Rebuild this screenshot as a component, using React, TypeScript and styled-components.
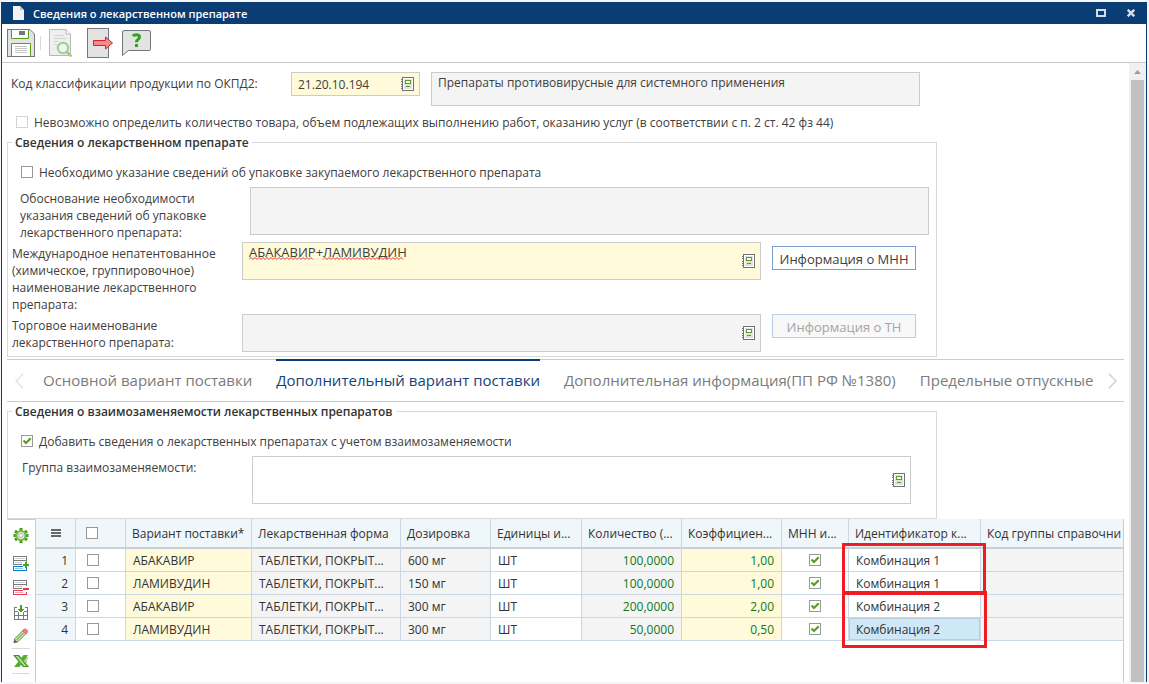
import React from "react";
import styled, { createGlobalStyle, css } from "styled-components";

const GlobalStyle = createGlobalStyle`
  *, *::before, *::after { box-sizing: border-box; }
  body {
    margin: 0;
    background: #fff;
    color: #404040;
    font-family: "Open Sans", "Noto Sans", sans-serif;
    font-size: 12px;
    line-height: 17px;
  }
  button, input, textarea { font: inherit; color: inherit; }
`;

const colors = {
  navy: "#0a3d73",
  line: "#cccccc",
  softLine: "#d9d9d9",
  gridLine: "#ccd7e4",
  head: "#eff7fb",
  yellow: "#fffad9",
  gray: "#f4f4f4",
  green: "#5a9e1c",
};

/* ---------- window frame ---------- */

const Desktop = styled.div`
  min-height: 100vh;
  display: flex;
  padding: 2px 2px 2px 1px;
  background: #f4f6f9;
`;

const Window = styled.main`
  flex: 1;
  min-width: 0;
  display: flex;
  flex-direction: column;
  background: #fff;
  border: solid ${colors.navy};
  border-width: 0 1px;
`;

const TitleBar = styled.header`
  height: 22px;
  display: flex;
  align-items: center;
  padding-left: 11px;
  background: ${colors.navy};
  color: #fff;
`;

const Title = styled.h1`
  flex: 1;
  margin: 0 0 0 9px;
  font-size: 11px;
  line-height: 17px;
  font-weight: 600;
`;

const IconButton = styled.button<{ $w: number; $h: number; $dim?: boolean }>`
  display: flex;
  align-items: center;
  justify-content: center;
  flex: none;
  width: ${(p) => p.$w}px;
  height: ${(p) => p.$h}px;
  padding: 0;
  border: 0;
  background: none;
  opacity: ${(p) => (p.$dim ? 0.5 : 1)};
`;

const Toolbar = styled.div`
  height: 39px;
  flex: none;
  display: flex;
  align-items: center;
  padding: 0 5px;
  border-bottom: 1px solid ${colors.line};
`;

const ToolDivider = styled.span`
  width: 1px;
  height: 14px;
  margin: 0 8px 0 5px;
  background: ${colors.softLine};
`;

const ToolGap = styled.span`
  width: 14px;
`;

const Body = styled.div`
  flex: 1;
  display: flex;
`;

const Content = styled.div`
  flex: 1;
  min-width: 0;
  display: flex;
  flex-direction: column;
  padding: 9px 5px 0;
`;

const ScrollTrack = styled.div`
  width: 17px;
  flex: none;
  display: flex;
  flex-direction: column;
  align-items: center;
  background: #f0f0f0;
`;

const ScrollThumb = styled.div`
  flex: 1;
  width: 13px;
  background: #c1c1c1;
`;

/* ---------- form ---------- */

const CodeRow = styled.div`
  display: flex;
  align-items: flex-start;
  padding-left: 4px;
`;

const CodeLabel = styled.label`
  width: 280px;
  flex: none;
  padding-top: 3px;
`;

const CodeGap = styled.span`
  width: 11px;
`;

type Tone = "yellow" | "gray" | "white";

const FieldBox = styled.div<{ $tone: Tone; $h: number; $max: number }>`
  flex: 1 1 0;
  min-width: 0;
  max-width: ${(p) => p.$max}px;
  height: ${(p) => p.$h}px;
  display: flex;
  align-items: center;
  padding-right: 5px;
  border: 1px solid ${colors.line};
  background: ${(p) => (p.$tone === "white" ? "#fff" : colors[p.$tone])};
  position: relative;
`;

const fieldText = css`
  flex: 1;
  min-width: 0;
  align-self: stretch;
  border: 0;
  outline: 0;
  background: none;
  padding: 1px 6px;
  line-height: 17px;
`;

const TextInput = styled.input`
  ${fieldText}
`;

const TextArea = styled.textarea<{ $large?: boolean }>`
  ${fieldText}
  font-size: ${(p) => (p.$large ? 13 : 12)}px;
  resize: none;
  overflow: hidden;
`;

const Squiggles = styled.svg`
  position: absolute;
  left: 6px;
  top: 14px;
  pointer-events: none;
`;

const CheckLine = styled.label<{ $indent: number; $top: number }>`
  display: flex;
  align-items: center;
  gap: 6px;
  height: 20px;
  margin: ${(p) => p.$top}px 0 0 ${(p) => p.$indent}px;
`;

const CheckSlot = styled.span<{ $center?: boolean }>`
  display: flex;
  align-items: center;
  justify-content: ${(p) => (p.$center ? "center" : "flex-start")};
  padding-left: ${(p) => (p.$center ? 0 : 4)}px;
`;

const TickWrap = styled.span`
  display: inline-grid;
  flex: none;
  width: 12px;
  height: 12px;
  vertical-align: middle;
  > * { grid-area: 1 / 1; }
`;

const TickInput = styled.input`
  appearance: none;
  width: 12px;
  height: 12px;
  margin: 0;
  border: 1px solid #999;
  background: #fff;
  &:disabled { border-color: #d4d4d4; }
`;

const Group = styled.fieldset<{ $top: number; $bottom: number }>`
  width: 100%;
  max-width: 930px;
  min-width: 0;
  margin: ${(p) => p.$top}px 0 0;
  padding: 0 0 ${(p) => p.$bottom}px;
  border: 1px solid ${colors.softLine};
`;

const Legend = styled.legend`
  margin-left: 4px;
  padding: 0 3px;
  font-weight: 600;
  color: #333;
`;

const FormRow = styled.div<{ $indent: number; $top: number }>`
  display: flex;
  align-items: flex-start;
  margin-top: ${(p) => p.$top}px;
  padding: 0 7px 0 ${(p) => p.$indent}px;
`;

const FormLabel = styled.label`
  width: 230px;
  flex: none;
  padding: 3px 10px 0 0;
`;

const ActionButton = styled.button<{ $top?: number }>`
  width: 144px;
  height: 24px;
  flex: none;
  margin: ${(p) => p.$top ?? 0}px 0 0 11px;
  padding: 2px 0 0;
  border: 1px solid #7ba0cc;
  background: #fff;
  font-size: 13px;
  &:disabled {
    color: #a5a5a5;
    border-color: #b9cde5;
    background: #f8f8f8;
  }
`;

/* ---------- tabs ---------- */

const TabBar = styled.nav`
  height: 43px;
  flex: none;
  display: flex;
  margin-top: 2px;
  border: solid ${colors.line};
  border-width: 1px 0;
`;

const TabList = styled.div`
  flex: 1;
  min-width: 0;
  display: flex;
  gap: 24px;
  margin: -1px 0 0 12px;
  overflow: hidden;
`;

const Tab = styled.button<{ $active?: boolean }>`
  flex: none;
  padding: 0 0 3px;
  border: 0;
  border-top: 2px solid ${(p) => (p.$active ? colors.navy : "transparent")};
  background: none;
  color: ${(p) => (p.$active ? "#15447c" : "#7b7b7b")};
  font-size: 15px;
  line-height: 20px;
  white-space: nowrap;
`;

/* ---------- grid ---------- */

const GridArea = styled.section`
  flex: 1;
  display: flex;
`;

const SideTools = styled.div`
  width: 28px;
  flex: none;
  display: flex;
  flex-direction: column;
  align-items: center;
  padding-top: 4px;
  border-top: 1px solid ${colors.line};
  > :first-child { margin-bottom: 4px; }
`;

const SideDivider = styled.span`
  width: 18px;
  height: 1px;
  background: ${colors.softLine};
`;

const GridFrame = styled.div`
  flex: 1;
  min-width: 0;
  border: solid ${colors.line};
  border-width: 0 1px;
  position: relative;
`;

const Table = styled.table`
  width: 100%;
  table-layout: fixed;
  border-collapse: separate;
  border-spacing: 0;
  color: #333;
`;

const HeadCell = styled.th`
  height: 30px;
  padding: 0 0 0 6px;
  border-right: 1px solid ${colors.gridLine};
  border-bottom: 2px solid #c9cfd4;
  background: ${colors.head};
  font-weight: 400;
  text-align: left;
  white-space: nowrap;
  overflow: hidden;
  &:last-child { border-right: 0; }
`;

type CellKind = "head" | "yellow" | "gray" | "white" | "selected";

const cellBg: Record<CellKind, string> = {
  head: colors.head,
  yellow: colors.yellow,
  gray: colors.gray,
  white: "#fff",
  selected: "#cfe8f8",
};

const Cell = styled.td<{ $kind: CellKind; $align?: "left" | "right" | "center"; $num?: boolean }>`
  height: 23px;
  padding: 0 7px;
  border-right: 1px solid ${colors.gridLine};
  border-bottom: 1px solid ${colors.gridLine};
  background: ${(p) => cellBg[p.$kind]};
  text-align: ${(p) => p.$align ?? "left"};
  color: ${(p) => (p.$num ? "#0b7a1c" : "inherit")};
  white-space: nowrap;
  overflow: hidden;
  &:last-child { border-right: 0; }
  ${(p) => p.$kind === "selected" && css`box-shadow: inset 0 0 0 1px #bccdd9;`}
`;

const Marker = styled.div<{ $top: number; $w: number; $h: number }>`
  position: absolute;
  left: 806px;
  top: ${(p) => p.$top}px;
  width: ${(p) => p.$w}px;
  height: ${(p) => p.$h}px;
  border: 3px solid #ee1c23;
  pointer-events: none;
`;

/* ---------- icons ---------- */

const PageIcon = () => (
  <svg width="11" height="14" viewBox="0 0 11 14">
    <path d="M0 0H7L11 4V14H0Z" fill="#f2f2f2" />
    <path d="M7 0V4H11Z" fill="#b9c4d0" />
  </svg>
);

const MaximizeIcon = () => (
  <svg width="10" height="8" viewBox="0 0 10 8" shapeRendering="crispEdges">
    <path d="M0 0H10V8H0ZM2 2V6H8V2Z" fill="#d5dee8" fillRule="evenodd" />
  </svg>
);

const CloseIcon = () => (
  <svg width="8" height="8" viewBox="0 0 8 8">
    <path d="M.7.7L7.300 7.300M7.300.7L.7 7.300" stroke="#d5dee8" strokeWidth="2.400" />
  </svg>
);

const SaveIcon = () => (
  <svg width="28" height="28" viewBox="0 0 28 28">
    <path d="M.5.5H23L27.500 5V27.500H.5Z" fill="#e3e3e3" stroke="#72777c" />
    <path d="M4.500 1V9.500H21.500V1" fill="#fff" stroke="#5a9e1c" />
    <rect x="12" y="2" width="6" height="4" fill="#72777c" />
    <path d="M4.500 27V14.500H23.500V27" fill="#fff" stroke="#5a9e1c" />
    <path d="M8 17.500H20M8 19.500H20M8 21.500H20M8 23.500H20" stroke="#c6c6c6" />
    <path d="M0 27.500H28M0 .5H23" stroke="#72777c" />
  </svg>
);

const PreviewIcon = () => (
  <svg width="24" height="28" viewBox="0 0 24 28">
    <path d="M.5.5H17L21.500 5V26.500H.5Z" fill="#e0e0e0" stroke="#6f7377" />
    <path d="M17 .5V5H21.500" fill="#fff" stroke="#6f7377" />
    <path d="M5 6.500H15M5 9.500H17M5 12.500H10M5 15.500H8" stroke="#a9a9a9" />
    <circle cx="14" cy="19" r="5.200" fill="#dce8f3" stroke="#4c9a1b" strokeWidth="2" />
    <path d="M18 23L22.500 27.500" stroke="#4c9a1b" strokeWidth="2.600" />
  </svg>
);

const ExitIcon = () => (
  <svg width="27" height="30" viewBox="0 0 27 30">
    <rect x=".5" y=".5" width="21" height="29" fill="#e3e3e3" stroke="#72777c" />
    <path d="M6.500 12.500H18.500V9L25.500 15L18.500 21V17.500H6.500Z" fill="#f8898b" stroke="#d2232a" />
  </svg>
);

const HelpIcon = () => (
  <svg width="30" height="28" viewBox="0 0 30 28">
    <path
      d="M2 1.500H27Q28.500 1.500 28.500 3V20Q28.500 21.500 27 21.500H6.500L.5 26.500V3Q.5 1.500 2 1.500Z"
      fill="#e3e3e3"
      stroke="#72777c"
    />
    <path
      d="M10.800 7.100Q12 5.700 14.300 5.700Q17.500 5.700 17.500 8.100Q17.500 9.500 16 10.500Q14.500 11.400 14.500 13.300"
      fill="none"
      stroke="#2fa31a"
      strokeWidth="3"
    />
    <rect x="13" y="15" width="3" height="3" fill="#2fa31a" />
  </svg>
);

const BookIcon = () => (
  <svg width="13" height="14" viewBox="0 0 13 14" shapeRendering="crispEdges">
    <rect x="1" y="0" width="12" height="14" fill="#6f7377" />
    <rect x="2" y="1" width="10" height="12" fill="#fff" />
    <rect x="3" y="2" width="8" height="10" fill="#e2e2e2" />
    <path d="M0 2H1V3H0ZM0 4H1V5H0ZM0 7H1V8H0ZM0 9H1V10H0ZM0 11H1V12H0Z" fill="#6f7377" />
    <path d="M4 3H10V7H4Z" fill={colors.green} />
    <rect x="5" y="4" width="4" height="2" fill="#fff" />
    <rect x="5" y="9" width="4" height="1" fill={colors.green} />
  </svg>
);

const TickMark = () => (
  <svg width="12" height="12" viewBox="0 0 12 12" pointerEvents="none">
    <path d="M2.500 5.500L5 8L9.700 3.300" fill="none" stroke={colors.green} strokeWidth="2.200" />
  </svg>
);

const ScrollUpIcon = () => (
  <svg width="7" height="4" viewBox="0 0 7 4">
    <path d="M0 4L3.500 0L7 4Z" fill="#9d9d9d" />
  </svg>
);

const ChevronIcon = ({ right }: { right?: boolean }) => (
  <svg width="9" height="16" viewBox="0 0 9 16">
    <path
      d={right ? "M.8.8L8 8L.8 15.200" : "M8.200.8L1 8L8.200 15.200"}
      fill="none"
      stroke={right ? "#cfcfcf" : "#e3e3e3"}
      strokeWidth="1.400"
    />
  </svg>
);

const MenuIcon = () => (
  <svg width="10" height="8" viewBox="0 0 10 8" shapeRendering="crispEdges">
    <path d="M0 0H10V2H0ZM0 3H10V5H0ZM0 6H10V8H0Z" fill="#666" />
  </svg>
);

const GearIcon = () => (
  <svg width="16" height="16" viewBox="0 0 16 16">
    <path d="M8 0V15M2 3L14 12M2 12L14 3M.5 7.500H15.500" stroke="#4c9a1b" strokeWidth="3" />
    <circle cx="8" cy="7.500" r="4.500" fill="#e8ecef" stroke="#79bb43" strokeWidth="2" />
    <circle cx="8" cy="7.500" r="2" fill="#fff" stroke="#a9b0b5" />
  </svg>
);

/* Two grey rows above a coloured one, with a plus or a minus at the right */
const RowsIcon = ({ add }: { add?: boolean }) => {
  const tone = add ? "#0a84c8" : "#e8384a";
  return (
    <svg width="16" height="16" viewBox="0 0 16 16" shapeRendering="crispEdges">
      <path d="M0 0H14V6H13V5H1V8H9V9H0ZM1 1V4H13V1Z" fill="#777c80" fillRule="evenodd" />
      <path d="M2 2H12V3H2ZM2 6H9V7H2Z" fill="#cfcfcf" />
      <path d="M0 10H10V11H1V14H13V12H14V15H0Z" fill={tone} />
      <path d="M2 12H10V13H2Z" fill={tone} opacity=".45" />
      <path d={add ? "M10 8H12V6H14V8H16V10H14V12H12V10H10Z" : "M10 8H16V10H10Z"} fill={add ? "#4f9f1f" : tone} />
    </svg>
  );
};

const TableIcon = () => (
  <svg width="14" height="16" viewBox="0 0 14 16" shapeRendering="crispEdges">
    <path d="M0 3H3V4H1V7H4V8H1V11H13V8H10V7H13V4H11V3H14V16H13V12H1V16H0Z" fill="#777c80" />
    <path d="M4 8H5V15H4ZM9 8H10V15H9ZM1 15H13V16H1Z" fill="#777c80" />
    <path d="M6 1H8V5H10V6H9V7H8V8H6V7H5V6H4V5H6Z" fill="#4f9f1f" />
  </svg>
);

const PencilIcon = () => (
  <svg width="16" height="16" viewBox="0 0 16 16">
    <path d="M1 14.500L2 10.500L10 2.500L13 5.500L5 13.500Z" fill="#d6ecc3" stroke="#5d8048" />
    <path d="M3.500 12L11 4.500" stroke="#7fbf4a" strokeWidth="1.500" />
    <path d="M9.700 2.600L11 1.300Q12.300.5 13.700 1.800Q15 3.200 14.200 4.500L12.900 5.800Z" fill="#f5848b" stroke="#d9606a" />
    <path d="M.5 15L1.300 11L4.500 14.200Z" fill="#666" />
  </svg>
);

const ExcelIcon = () => (
  <svg width="16" height="12" viewBox="0 0 16 12">
    <path d="M0 0H6L16 12H10Z" fill="#3f9320" />
    <path d="M10.500 0H15L6.500 12H1Z" fill="#5bab33" />
    <path d="M2.500 1H5L13.500 11H11Z" fill="#b6dc9b" />
    <path d="M12 3H15M11 5H14M12 7H14" stroke="#5bab33" />
  </svg>
);

/* ---------- parts ---------- */

type TickProps = { checked?: boolean; disabled?: boolean; label?: string };

const Tick = ({ checked, disabled, label }: TickProps) => (
  <TickWrap>
    <TickInput type="checkbox" defaultChecked={checked} disabled={disabled} aria-label={label} />
    {checked && <TickMark />}
  </TickWrap>
);

const PickButton = ({ label }: { label: string }) => (
  <IconButton type="button" $w={13} $h={14} aria-label={label}>
    <BookIcon />
  </IconButton>
);

/* Zigzag under one misspelled word, from x to x + width */
const zigzag = (x: number, width: number) => {
  let d = `M${x} 2.500`;
  for (let i = 2, up = true; i <= width; i += 2, up = !up) d += `L${x + i} ${up ? 0.5 : 2.5}`;
  return d;
};

const rows = [
  { name: "АБАКАВИР", dose: "600 мг", qty: "100,0000", coef: "1,00", combo: "Комбинация 1" },
  { name: "ЛАМИВУДИН", dose: "150 мг", qty: "100,0000", coef: "1,00", combo: "Комбинация 1" },
  { name: "АБАКАВИР", dose: "300 мг", qty: "200,0000", coef: "2,00", combo: "Комбинация 2" },
  { name: "ЛАМИВУДИН", dose: "300 мг", qty: "50,0000", coef: "0,50", combo: "Комбинация 2" },
];

const heads = [
  "Вариант поставки*",
  "Лекарственная форма",
  "Дозировка",
  "Единицы и...",
  "Количество (...",
  "Коэффициен...",
  "МНН и...",
  "Идентификатор к...",
  "Код группы справочни",
];

const colWidths = [40, 50, 126, 149, 90, 91, 100, 100, 67, 132];

const tabs = [
  "Основной вариант поставки",
  "Дополнительный вариант поставки",
  "Дополнительная информация(ПП РФ №1380)",
  "Предельные отпускные",
];

export default function App() {
  return (
    <>
      <GlobalStyle />
      <Desktop>
        <Window>
          <TitleBar>
            <PageIcon />
            <Title>Сведения о лекарственном препарате</Title>
            <IconButton type="button" $w={30} $h={22} aria-label="Развернуть">
              <MaximizeIcon />
            </IconButton>
            <IconButton type="button" $w={30} $h={22} aria-label="Закрыть">
              <CloseIcon />
            </IconButton>
          </TitleBar>

          <Toolbar>
            <IconButton type="button" $w={28} $h={30} aria-label="Сохранить">
              <SaveIcon />
            </IconButton>
            <ToolDivider />
            <IconButton type="button" $w={24} $h={30} $dim aria-label="Просмотр">
              <PreviewIcon />
            </IconButton>
            <ToolGap />
            <IconButton type="button" $w={27} $h={30} aria-label="Выход">
              <ExitIcon />
            </IconButton>
            <IconButton type="button" $w={46} $h={30} aria-label="Справка">
              <HelpIcon />
            </IconButton>
          </Toolbar>

          <Body>
            <Content>
              <CodeRow>
                <CodeLabel htmlFor="okpd">Код классификации продукции по ОКПД2:</CodeLabel>
                <FieldBox $tone="yellow" $h={24} $max={129}>
                  <TextInput id="okpd" defaultValue="21.20.10.194" />
                  <PickButton label="Выбрать код" />
                </FieldBox>
                <CodeGap />
                <FieldBox $tone="gray" $h={34} $max={489}>
                  <TextArea
                    readOnly
                    aria-label="Наименование кода"
                    value="Препараты противовирусные для системного применения"
                  />
                </FieldBox>
              </CodeRow>

              <CheckLine $indent={9} $top={6}>
                <Tick disabled />
                Невозможно определить количество товара, объем подлежащих выполнению работ, оказанию услуг (в
                соответствии с п. 2 ст. 42 фз 44)
              </CheckLine>

              <Group $top={2} $bottom={4}>
                <Legend>Сведения о лекарственном препарате</Legend>
                <CheckLine $indent={13} $top={11}>
                  <Tick />
                  Необходимо указание сведений об упаковке закупаемого лекарственного препарата
                </CheckLine>
                <FormRow $indent={12} $top={5}>
                  <FormLabel htmlFor="reason">
                    Обоснование необходимости указания сведений об упаковке лекарственного препарата:
                  </FormLabel>
                  <FieldBox $tone="gray" $h={48} $max={679}>
                    <TextArea id="reason" readOnly />
                  </FieldBox>
                </FormRow>
                <FormRow $indent={4} $top={1}>
                  <FormLabel htmlFor="inn">
                    Международное непатентованное (химическое, группировочное) наименование лекарственного препарата:
                  </FormLabel>
                  <FieldBox $tone="yellow" $h={38} $max={519}>
                    <TextArea id="inn" $large spellCheck={false} defaultValue="АБАКАВИР+ЛАМИВУДИН" />
                    <Squiggles width="156" height="3" viewBox="0 0 156 3">
                      <path d={zigzag(0, 64)} fill="none" stroke="#f03030" />
                      <path d={zigzag(74, 80)} fill="none" stroke="#f03030" />
                    </Squiggles>
                    <PickButton label="Выбрать МНН" />
                  </FieldBox>
                  <ActionButton type="button" $top={4}>
                    Информация о МНН
                  </ActionButton>
                </FormRow>
                <FormRow $indent={4} $top={1}>
                  <FormLabel htmlFor="trade">Торговое наименование лекарственного препарата:</FormLabel>
                  <FieldBox $tone="gray" $h={38} $max={519}>
                    <TextArea id="trade" readOnly />
                    <PickButton label="Выбрать ТН" />
                  </FieldBox>
                  <ActionButton type="button" disabled>
                    Информация о ТН
                  </ActionButton>
                </FormRow>
              </Group>

              <TabBar>
                <IconButton type="button" $w={24} $h={41} aria-label="Предыдущие вкладки">
                  <ChevronIcon />
                </IconButton>
                <TabList role="tablist">
                  {tabs.map((t, i) => (
                    <Tab key={t} type="button" role="tab" $active={i === 1} aria-selected={i === 1}>
                      {t}
                    </Tab>
                  ))}
                </TabList>
                <IconButton type="button" $w={24} $h={41} aria-label="Следующие вкладки">
                  <ChevronIcon right />
                </IconButton>
              </TabBar>

              <Group $top={1} $bottom={14}>
                <Legend>Сведения о взаимозаменяемости лекарственных препаратов</Legend>
                <CheckLine $indent={13} $top={11}>
                  <Tick checked />
                  Добавить сведения о лекарственных препаратах с учетом взаимозаменяемости
                </CheckLine>
                <FormRow $indent={14} $top={5}>
                  <FormLabel htmlFor="group">Группа взаимозаменяемости:</FormLabel>
                  <FieldBox $tone="white" $h={48} $max={659}>
                    <TextArea id="group" />
                    <PickButton label="Выбрать группу" />
                  </FieldBox>
                </FormRow>
              </Group>

              <GridArea>
                <SideTools>
                  <IconButton type="button" $w={24} $h={24} aria-label="Настройки">
                    <GearIcon />
                  </IconButton>
                  <IconButton type="button" $w={24} $h={24} aria-label="Добавить строку">
                    <RowsIcon add />
                  </IconButton>
                  <IconButton type="button" $w={24} $h={24} aria-label="Удалить строку">
                    <RowsIcon />
                  </IconButton>
                  <IconButton type="button" $w={24} $h={24} aria-label="Загрузить таблицу">
                    <TableIcon />
                  </IconButton>
                  <IconButton type="button" $w={24} $h={24} aria-label="Редактировать">
                    <PencilIcon />
                  </IconButton>
                  <SideDivider />
                  <IconButton type="button" $w={24} $h={24} aria-label="Выгрузить в Excel">
                    <ExcelIcon />
                  </IconButton>
                  <SideDivider />
                </SideTools>
                <GridFrame>
                  <Table>
                    <colgroup>
                      {colWidths.map((w, i) => (
                        <col key={i} width={w} />
                      ))}
                      <col />
                    </colgroup>
                    <thead>
                      <tr>
                        <HeadCell>
                          <IconButton type="button" $w={28} $h={20} aria-label="Меню таблицы">
                            <MenuIcon />
                          </IconButton>
                        </HeadCell>
                        <HeadCell>
                          <CheckSlot>
                            <Tick label="Выбрать все" />
                          </CheckSlot>
                        </HeadCell>
                        {heads.map((h) => (
                          <HeadCell key={h}>{h}</HeadCell>
                        ))}
                      </tr>
                    </thead>
                    <tbody>
                      {rows.map((r, i) => (
                        <tr key={i}>
                          <Cell $kind="head" $align="right">
                            {i + 1}
                          </Cell>
                          <Cell $kind="white">
                            <CheckSlot>
                              <Tick label={`Выбрать строку ${i + 1}`} />
                            </CheckSlot>
                          </Cell>
                          <Cell $kind="yellow">{r.name}</Cell>
                          <Cell $kind="gray">ТАБЛЕТКИ, ПОКРЫТ...</Cell>
                          <Cell $kind="gray">{r.dose}</Cell>
                          <Cell $kind="white">ШТ</Cell>
                          <Cell $kind="gray" $align="right" $num>
                            {r.qty}
                          </Cell>
                          <Cell $kind="yellow" $align="right" $num>
                            {r.coef}
                          </Cell>
                          <Cell $kind="white" $align="center">
                            <CheckSlot $center>
                              <Tick checked label={`МНН, строка ${i + 1}`} />
                            </CheckSlot>
                          </Cell>
                          <Cell $kind={i === 3 ? "selected" : "white"}>{r.combo}</Cell>
                          <Cell $kind="gray" />
                        </tr>
                      ))}
                    </tbody>
                  </Table>
                  <Marker $top={24} $w={144} $h={52} />
                  <Marker $top={72} $w={145} $h={57} />
                </GridFrame>
              </GridArea>
            </Content>
            <ScrollTrack>
              <IconButton type="button" $w={17} $h={17} aria-label="Вверх">
                <ScrollUpIcon />
              </IconButton>
              <ScrollThumb />
            </ScrollTrack>
          </Body>
        </Window>
      </Desktop>
    </>
  );
}
